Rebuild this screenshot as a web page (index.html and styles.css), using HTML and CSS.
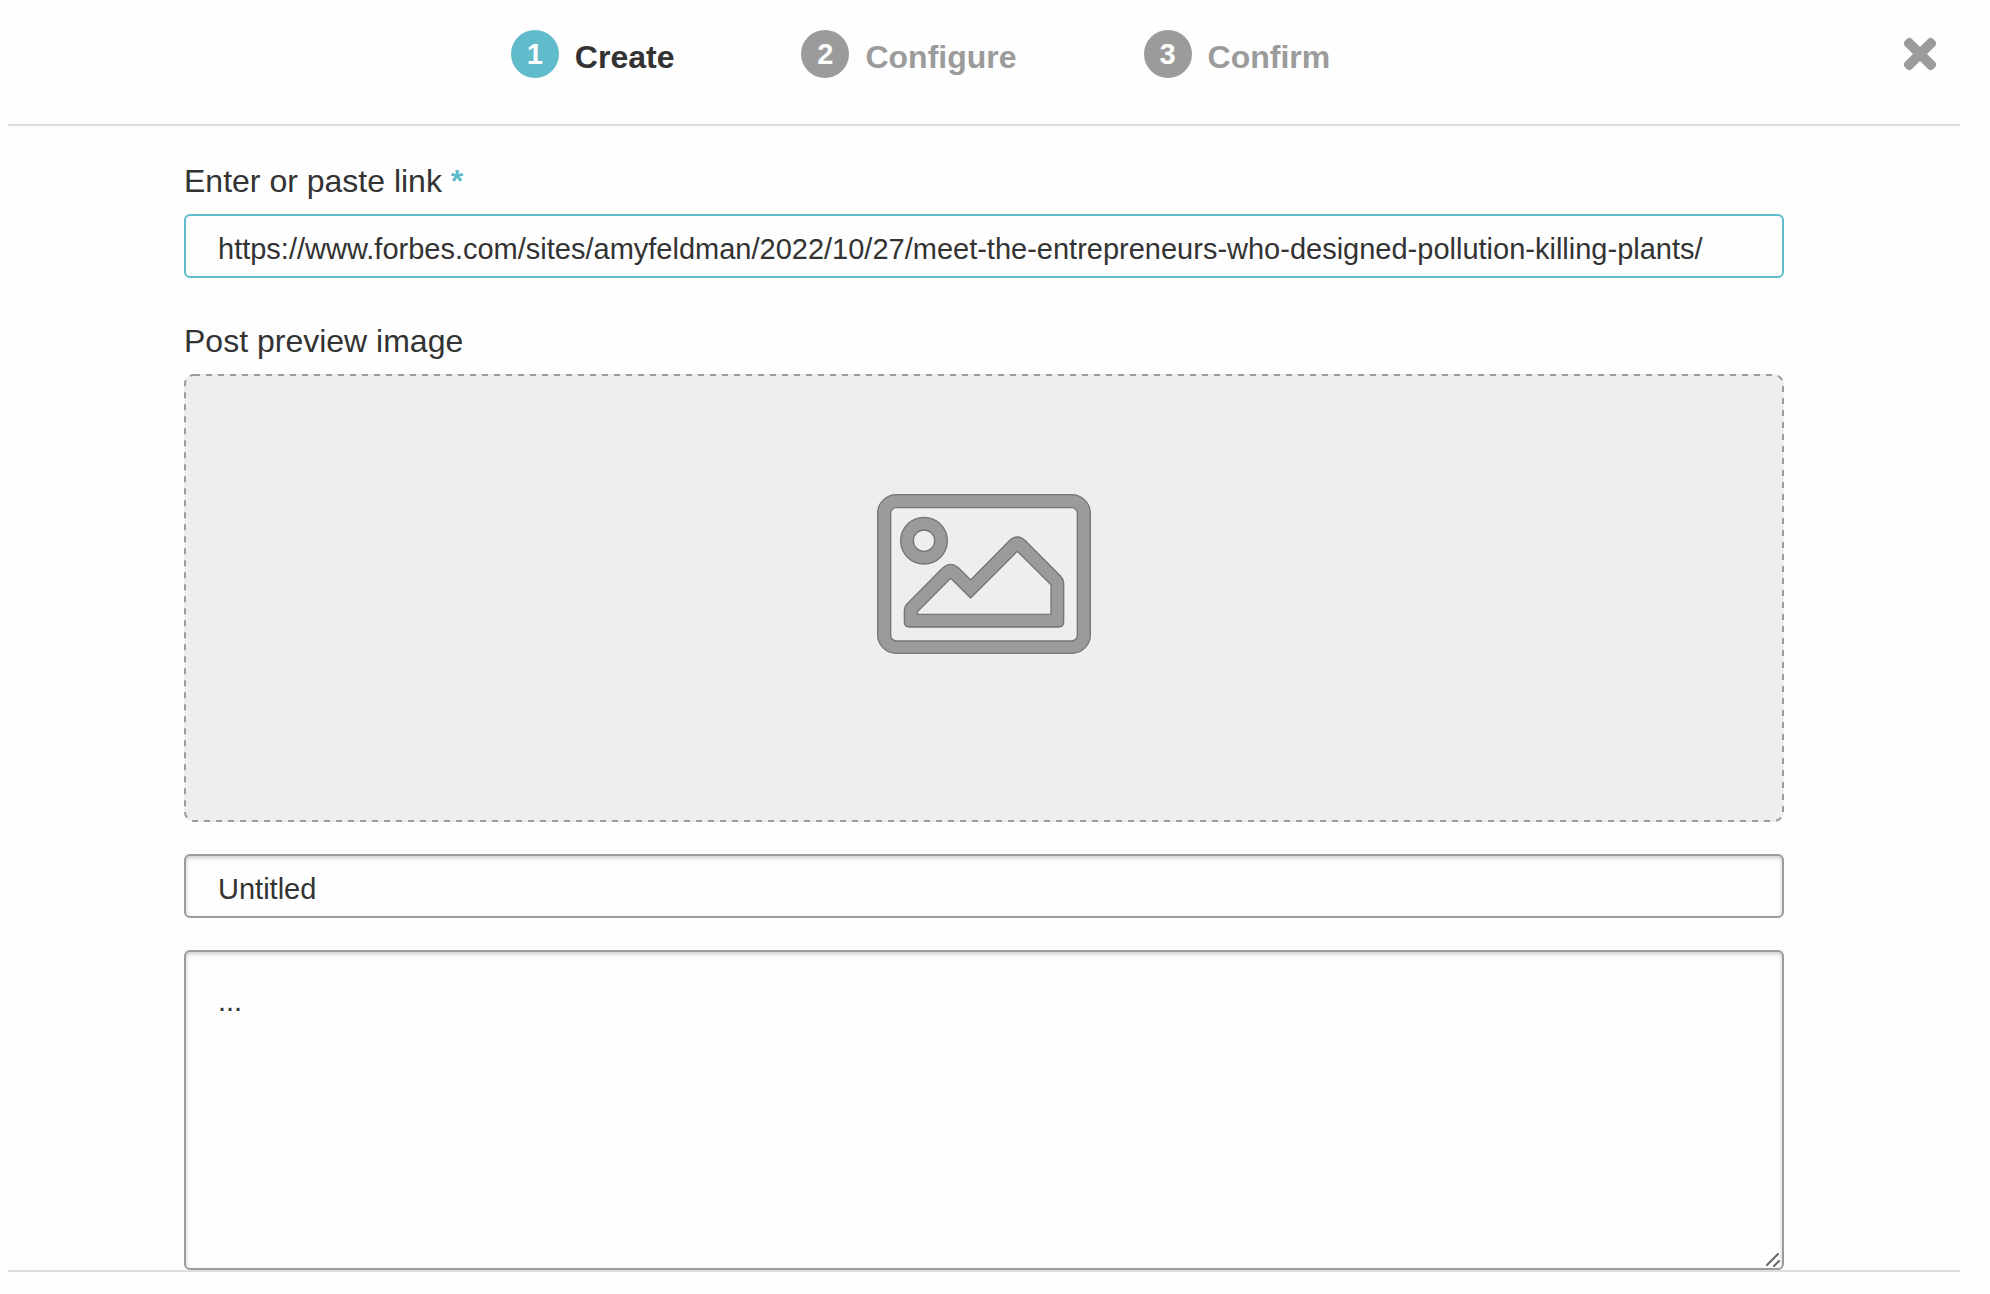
FILE: index.html
```
<!DOCTYPE html>
<html lang="en">
<head>
    <meta charset="UTF-8">
    <meta name="viewport" content="width=device-width, initial-scale=1.0">
    <title>Create Post</title>
    <link rel="stylesheet" href="styles.css">
</head>
<body>

    <div class="modal">
        <!-- Wizard steps and close button -->
        <header class="modal-header">
            <ol class="steps">
                <li class="step active"><span class="step-number">1</span><span class="step-name">Create</span></li>
                <li class="step"><span class="step-number">2</span><span class="step-name">Configure</span></li>
                <li class="step"><span class="step-number">3</span><span class="step-name">Confirm</span></li>
            </ol>
            <button type="button" class="close-button" aria-label="Close">
                <svg viewBox="0 0 34 34" width="34" height="34" fill="currentColor">
                    <rect x="-3" y="12" width="40" height="10" rx="4" transform="rotate(45 17 17)"/>
                    <rect x="-3" y="12" width="40" height="10" rx="4" transform="rotate(-45 17 17)"/>
                </svg>
            </button>
        </header>

        <!-- Post form -->
        <form class="post-form">
            <label for="postLink">Enter or paste link <span class="required">*</span></label>
            <input type="text" id="postLink" class="link-input" value="https://www.forbes.com/sites/amyfeldman/2022/10/27/meet-the-entrepreneurs-who-designed-pollution-killing-plants/">

            <label for="previewImage">Post preview image</label>
            <button type="button" id="previewImage" class="preview-image">
                <svg class="dashed-outline"><rect x="1" y="1" rx="9"/></svg>
                <svg viewBox="0 0 642 480" width="214" height="160">
                    <g fill="#9b9b9b" stroke="#757575" stroke-width="4" fill-rule="evenodd" stroke-linejoin="round">
                        <path d="M58 2H584A56 56 0 0 1 640 58V422A56 56 0 0 1 584 478H58A56 56 0 0 1 2 422V58A56 56 0 0 1 58 2ZM58 41A17 17 0 0 0 41 58V424A17 17 0 0 0 58 441H584A17 17 0 0 0 601 424V58A17 17 0 0 0 584 41Z"/>
                        <path d="M141 70A70 70 0 1 1 141 210A70 70 0 1 1 141 70ZM141 108A32 32 0 1 0 141 172A32 32 0 1 0 141 108Z"/>
                        <path d="M90 330L197 222Q221 200 245 222L281 258L397 140Q421 118 445 140L551 247Q560 256 560 268V384Q560 399 545 399H97Q82 399 82 384V347Q82 338 90 330ZM121 361H522V272L421 172L281 312L221 253L121 353Z"/>
                    </g>
                </svg>
            </button>

            <input type="text" class="title-input" aria-label="Title" value="Untitled">

            <div class="description">
                <textarea aria-label="Description">...</textarea>
                <svg class="resize-handle" viewBox="0 0 16 16" width="16" height="16">
                    <path d="M2 14L13 3M9 15L14 10" stroke="#666" stroke-width="2" stroke-linecap="round"/>
                </svg>
            </div>
        </form>

        <footer class="modal-footer"></footer>
    </div>

</body>
</html>
```
FILE: styles.css
```
* {
    box-sizing: border-box;
}

body {
    margin: 0;
    background-color: #fefefe;
    color: #333;
    font-family: "Liberation Sans", Arial, sans-serif;
    font-size: 32px;
}

.modal {
    margin: 0 30px 0 8px;
}

/* Header with the steps */
.modal-header {
    display: flex;
    align-items: center;
    padding: 30px 23px 46px 0;
    border-bottom: 2px solid #ddd;
}

.steps {
    flex: 1;
    display: flex;
    justify-content: center;
    gap: 127px;
    margin: 0;
    padding: 0 70px 0 0;
    list-style: none;
}

.step {
    display: flex;
    gap: 16px;
    color: #9b9b9b;
    font-weight: bold;
    line-height: 48px;
}

.step-number {
    width: 48px;
    height: 48px;
    border-radius: 50%;
    background-color: #9b9b9b;
    color: #fefefe;
    font-size: 29px;
    text-align: center;
}

.step-name {
    height: 48px;
    padding-top: 3px;
}

.step.active {
    color: #333;
}

.step.active .step-number {
    background-color: #60bbcb;
}

.close-button {
    display: flex;
    padding: 0;
    border: none;
    background: none;
    color: #9b9b9b;
    cursor: pointer;
}

/* Form fields */
.post-form {
    max-width: 1600px;
    margin: 0 auto;
    padding-top: 24px;
}

.post-form label {
    display: block;
    margin-bottom: 2px;
    line-height: 62px;
}

.required {
    color: #60bbcb;
    font-weight: bold;
}

.post-form input,
.post-form textarea {
    display: block;
    width: 100%;
    padding: 6px 32px 0;
    border: 2px solid #9b9b9b;
    border-radius: 6px;
    background-color: #fefefe;
    box-shadow: inset 0 2px 4px rgba(0, 0, 0, 0.2);
    color: #333;
    font-family: inherit;
    font-size: 29px;
    outline: none;
}

.post-form input {
    height: 64px;
    margin-bottom: 32px;
}

.post-form .link-input {
    border-color: #60bbcb;
    box-shadow: none;
}

.preview-image {
    position: relative;
    display: flex;
    justify-content: center;
    align-items: center;
    width: 100%;
    height: 448px;
    margin-bottom: 32px;
    padding: 0 0 48px;
    border: none;
    border-radius: 10px;
    background-color: #eee;
    cursor: pointer;
}

.dashed-outline {
    position: absolute;
    top: 0;
    left: 0;
    width: 100%;
    height: 100%;
}

.dashed-outline rect {
    width: calc(100% - 2px);
    height: calc(100% - 2px);
    fill: none;
    stroke: #9b9b9b;
    stroke-width: 2px;
    stroke-dasharray: 6 6;
}

.description {
    position: relative;
}

.post-form textarea {
    height: 320px;
    padding-top: 28px;
    line-height: 42px;
    resize: none;
}

/* Grip in the corner of the textarea */
.resize-handle {
    position: absolute;
    right: 3px;
    bottom: 3px;
    pointer-events: none;
}

.modal-footer {
    height: 24px;
    border-top: 2px solid #ddd;
}
```
